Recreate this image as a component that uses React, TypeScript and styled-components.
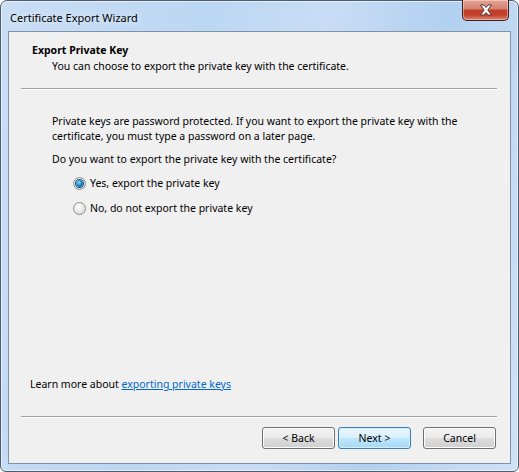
import React, { useState } from "react";
import styled, { createGlobalStyle } from "styled-components";

const GlobalStyle = createGlobalStyle`
  html, body {
    margin: 0;
    padding: 0;
    background: #ffffff;
  }
  body {
    font-family: "Noto Sans", "Liberation Sans", sans-serif;
    font-size: 10.5px;
    color: #000;
  }
`;

const Window = styled.div`
  box-sizing: border-box;
  width: 519px;
  height: 472px;
  display: flex;
  flex-direction: column;
  border: 1px solid #4f5d6e;
  border-radius: 7px 7px 6px 6px;
  background: linear-gradient(
    100deg,
    #c9def5 0%,
    #bcd7f3 35%,
    #c8ddf5 55%,
    #b2d0f0 75%,
    #cfe2f7 100%
  );
  box-shadow: inset 0 0 0 1px rgba(255, 255, 255, 0.55);
  padding: 0 7px 7px 7px;
`;

const TitleBar = styled.div`
  height: 30px;
  display: flex;
  align-items: flex-start;
`;

const TitleText = styled.span`
  margin: 9px 0 0 2px;
  font-size: 11px;
  line-height: 16px;
  color: #000;
  text-shadow: 0 0 6px rgba(255, 255, 255, 0.9);
`;

const CloseButton = styled.button`
  margin-left: auto;
  margin-top: -1px;
  margin-right: 2px;
  width: 47px;
  height: 21px;
  padding: 0;
  border: 1px solid #3b1f1f;
  border-top: none;
  border-radius: 0 0 5px 5px;
  background: linear-gradient(
    to bottom,
    #e4a597 0%,
    #d3806f 45%,
    #c23e28 50%,
    #c4412b 75%,
    #dc8a72 100%
  );
  box-shadow: inset 0 0 0 1px rgba(255, 220, 210, 0.5);
  display: flex;
  align-items: center;
  justify-content: center;
`;

const Client = styled.div`
  flex: 1;
  display: flex;
  flex-direction: column;
  border: 1px solid #7f92a8;
  background: #f0f0f0;
`;

const Header = styled.div`
  padding: 10px 0 0 23px;
  height: 46px;
`;

const HeaderTitle = styled.div`
  font-weight: bold;
  line-height: 16px;
`;

const HeaderSub = styled.div`
  padding-left: 20px;
  line-height: 16px;
`;

const Separator = styled.div`
  margin: 0 13px 0 12px;
  height: 1px;
  background: #a0a0a0;
  border-bottom: 1px solid #ffffff;
`;

const Body = styled.div`
  flex: 1;
  display: flex;
  flex-direction: column;
  padding: 24px 0 0 43px;
`;

const Paragraph = styled.p`
  margin: 0;
  line-height: 15px;
  width: 420px;
`;

const Question = styled.p`
  margin: 8px 0 0 0;
  line-height: 15px;
`;

const Options = styled.div`
  display: flex;
  flex-direction: column;
  gap: 10px;
  margin: 9px 0 0 21px;
`;

const OptionRow = styled.label`
  display: flex;
  align-items: center;
  gap: 4px;
  line-height: 15px;
  cursor: default;
`;

const RadioCircle = styled.span<{ $checked: boolean }>`
  box-sizing: border-box;
  width: 13px;
  height: 13px;
  border-radius: 50%;
  border: 1px solid #8e8f8f;
  background: radial-gradient(circle at 40% 35%, #ffffff 0%, #e6e6e6 55%, #d0d0d0 100%);
  display: flex;
  align-items: center;
  justify-content: center;

  &::after {
    content: "";
    width: 7px;
    height: 7px;
    border-radius: 50%;
    display: ${(p) => (p.$checked ? "block" : "none")};
    background: radial-gradient(circle at 40% 35%, #8fd4f6 0%, #1d8fc9 45%, #0b4a85 100%);
    box-shadow: 0 0 0 1px #1a4f7c;
  }
`;

const LearnMore = styled.div`
  margin-top: auto;
  padding: 0 0 24px 21px;
  line-height: 15px;
`;

const Link = styled.a`
  color: #0066cc;
  text-decoration: underline;
  cursor: pointer;
`;

const Footer = styled.div`
  display: flex;
  justify-content: flex-end;
  align-items: center;
  padding: 9px 14px 14px 0;
`;

const WizardButton = styled.button<{ $primary?: boolean; $gapLeft?: number }>`
  box-sizing: border-box;
  width: 73px;
  height: 22px;
  margin-left: ${(p) => p.$gapLeft ?? 0}px;
  padding: 0;
  font-family: inherit;
  font-size: 10.5px;
  color: #000;
  border-radius: 3px;
  border: 1px solid ${(p) => (p.$primary ? "#3c7fb1" : "#707070")};
  background: ${(p) =>
    p.$primary
      ? "linear-gradient(to bottom, #eaf6fd 0%, #d9f0fc 50%, #bee6fd 51%, #a7d9f5 100%)"
      : "linear-gradient(to bottom, #f2f2f2 0%, #ebebeb 50%, #dddddd 51%, #cfcfcf 100%)"};
  box-shadow: inset 0 0 0 1px ${(p) => (p.$primary ? "#cdeffb" : "#fcfcfc")};
`;

type Choice = "yes" | "no";

const App: React.FC = () => {
  const [choice, setChoice] = useState<Choice>("yes");

  return (
    <>
      <GlobalStyle />
      <Window>
        <TitleBar>
          <TitleText>Certificate Export Wizard</TitleText>
          <CloseButton aria-label="Close">
            <svg width="14" height="12" viewBox="0 0 14 12">
              <path
                d="M1.5 1 L5 1 L7 3.5 L9 1 L12.5 1 L8.8 6 L12.5 11 L9 11 L7 8.5 L5 11 L1.5 11 L5.2 6 Z"
                fill="#ffffff"
                stroke="#4a2a2a"
                strokeWidth="0.9"
                strokeLinejoin="round"
              />
            </svg>
          </CloseButton>
        </TitleBar>
        <Client>
          <Header>
            <HeaderTitle>Export Private Key</HeaderTitle>
            <HeaderSub>
              You can choose to export the private key with the certificate.
            </HeaderSub>
          </Header>
          <Separator />
          <Body>
            <Paragraph>
              Private keys are password protected. If you want to export the
              private key with the certificate, you must type a password on a
              later page.
            </Paragraph>
            <Question>
              Do you want to export the private key with the certificate?
            </Question>
            <Options>
              <OptionRow onClick={() => setChoice("yes")}>
                <RadioCircle $checked={choice === "yes"} />
                Yes, export the private key
              </OptionRow>
              <OptionRow onClick={() => setChoice("no")}>
                <RadioCircle $checked={choice === "no"} />
                No, do not export the private key
              </OptionRow>
            </Options>
          </Body>
          <LearnMore>
            Learn more about <Link>exporting private keys</Link>
          </LearnMore>
          <Separator />
          <Footer>
            <WizardButton>&lt; Back</WizardButton>
            <WizardButton $primary $gapLeft={3}>
              Next &gt;
            </WizardButton>
            <WizardButton $gapLeft={12}>Cancel</WizardButton>
          </Footer>
        </Client>
      </Window>
    </>
  );
};

export default App;
